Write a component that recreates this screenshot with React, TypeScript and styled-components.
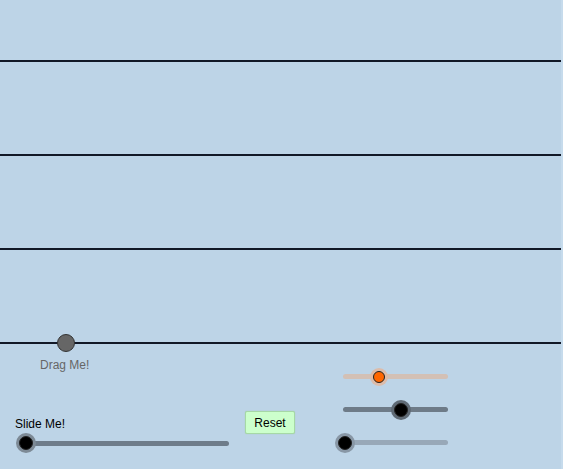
import styled, { createGlobalStyle } from 'styled-components';

const GlobalStyle = createGlobalStyle`
  html, body {
    margin: 0;
    padding: 0;
    background: #c6dbec;
    font-family: "Liberation Sans", Arial, sans-serif;
  }
`;

const Board = styled.main`
  position: relative;
  width: 561px;
  height: 469px;
  background: #bdd4e7;
  overflow: hidden;
  padding-top: 60px;
  box-sizing: border-box;
`;

const Stave = styled.div`
  display: flex;
  flex-direction: column;
  gap: 92px;
`;

const Line = styled.div`
  height: 2px;
  background: #111827;
`;

const Point = styled.div`
  position: absolute;
  left: 57px;
  top: 334px;
  width: 18px;
  height: 18px;
  border-radius: 50%;
  background: #666666;
  border: 1px solid #333333;
  box-sizing: border-box;
`;

const Caption = styled.span<{ $x: number; $y: number; $muted?: boolean }>`
  position: absolute;
  left: ${(p) => p.$x}px;
  top: ${(p) => p.$y}px;
  font-size: 12px;
  line-height: 14px;
  color: ${(p) => (p.$muted ? '#666666' : '#000000')};
  white-space: nowrap;
`;

const ResetButton = styled.button`
  position: absolute;
  left: 245px;
  top: 411px;
  width: 50px;
  height: 23px;
  padding: 0;
  background: #ccffcc;
  border: 1px solid #a6d8a6;
  border-radius: 2px;
  box-shadow: 0 0 1px #9cc89c;
  font-family: "Liberation Sans", Arial, sans-serif;
  font-size: 12px;
  color: #000;
`;

const SliderStack = styled.div`
  position: absolute;
  left: 343px;
  top: 374px;
  display: flex;
  flex-direction: column;
  gap: 28px;
`;

const Track = styled.div<{ $w: number; $color: string }>`
  position: relative;
  width: ${(p) => p.$w}px;
  height: 5px;
  border-radius: 3px;
  background: ${(p) => p.$color};
`;

const MainTrack = styled(Track)`
  position: absolute;
  left: 26px;
  top: 440.5px;
`;

const Thumb = styled.div<{ $at: number; $fill: string; $halo: string; $r: number }>`
  position: absolute;
  left: ${(p) => p.$at - p.$r}px;
  top: ${(p) => 2.5 - p.$r}px;
  width: ${(p) => p.$r * 2}px;
  height: ${(p) => p.$r * 2}px;
  border-radius: 50%;
  background: ${(p) => p.$fill};
  border: 1px solid #222;
  box-sizing: border-box;
  box-shadow: 0 0 0 3px ${(p) => p.$halo};
`;

interface SliderSpec {
  w: number;
  track: string;
  at: number;
  fill: string;
  halo: string;
  r: number;
}

const sideSliders: SliderSpec[] = [
  { w: 105, track: '#d3c0b5', at: 36, fill: '#ff6600', halo: '#dcbcab', r: 6 },
  { w: 105, track: '#6e7b88', at: 58, fill: '#000', halo: '#5f6a75', r: 7 },
  { w: 105, track: '#98a8b8', at: 2, fill: '#000', halo: '#8897a6', r: 7 },
];

export default function App() {
  return (
    <>
      <GlobalStyle />
      <Board>
        <Stave>
          <Line />
          <Line />
          <Line />
          <Line />
        </Stave>
        <Point />
        <Caption $x={40} $y={358} $muted>
          Drag Me!
        </Caption>
        <Caption $x={15} $y={417}>
          Slide Me!
        </Caption>
        <ResetButton>Reset</ResetButton>
        <MainTrack $w={203} $color="#6e7c8a">
          <Thumb $at={0} $fill="#000" $halo="#7d8a96" $r={7} />
        </MainTrack>
        <SliderStack>
          {sideSliders.map((s, i) => (
            <Track key={i} $w={s.w} $color={s.track}>
              <Thumb $at={s.at} $fill={s.fill} $halo={s.halo} $r={s.r} />
            </Track>
          ))}
        </SliderStack>
      </Board>
    </>
  );
}
